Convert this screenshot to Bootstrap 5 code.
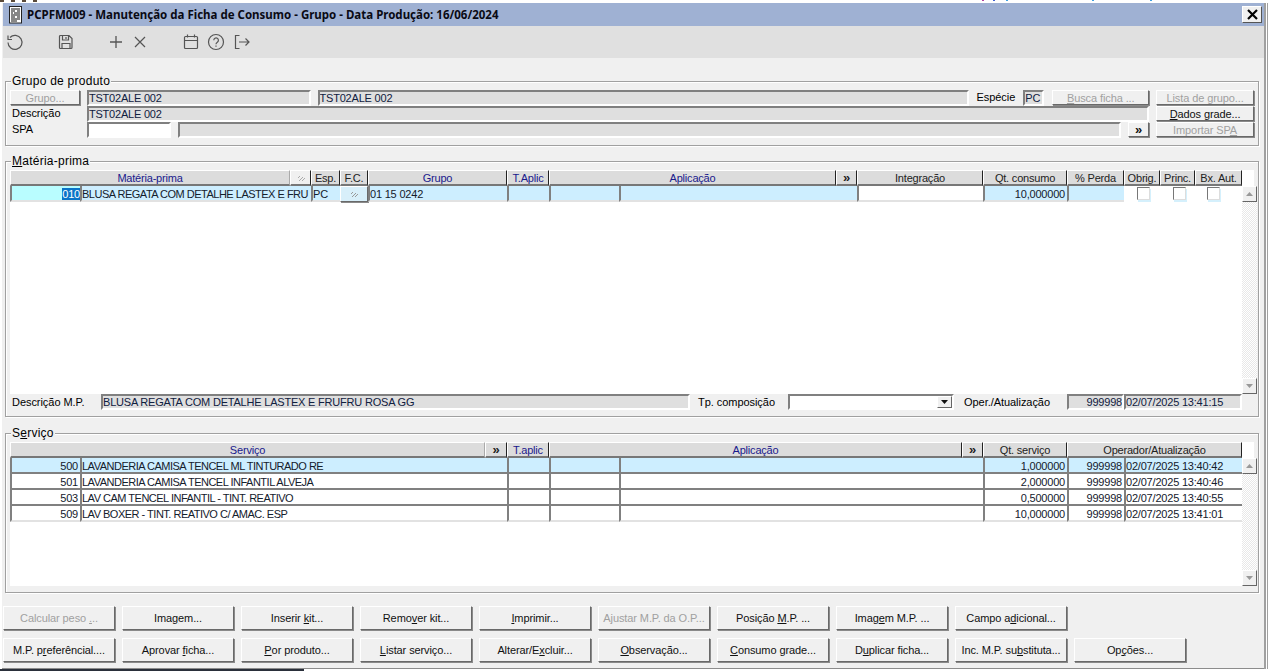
<!DOCTYPE html>
<html lang="pt">
<head>
<meta charset="utf-8">
<title>PCPFM009</title>
<link href="https://cdn.jsdelivr.net/npm/bootstrap@5.3.0/dist/css/bootstrap.min.css" rel="stylesheet">
<style>
html,body{height:671px;overflow:hidden;background:#fff}
body{font:11px/14px "Liberation Sans",Arial,sans-serif;color:#000;letter-spacing:-.2px}
.strip{height:3px;background:
 linear-gradient(90deg,#5a4a3a 0 4px,transparent 4px 11px,#5a4a3a 11px 15px,transparent 15px 22px,#5a4a3a 22px 26px,transparent 26px 33px,#5a4a3a 33px 37px,transparent 37px) 0 0/60px 2px no-repeat,
 linear-gradient(90deg,#b040a0 0 2px,transparent 2px 11px,#4060d0 11px 13px,transparent 13px 24px,#40a0e0 24px 26px,transparent 26px 110px,#40a0e0 110px 112px,transparent 112px 168px,#40a0e0 168px 170px,transparent 170px) 982px 0/200px 1px no-repeat,#fff}
.appwin{margin-left:2px;width:1261px;height:665px;background:#f0f0f0;border-bottom:1px solid #8c8c8c;box-shadow:2px 0 0 #a0a0a0,3px 0 0 #fff,4px 0 0 #a0a0a0;box-sizing:content-box;padding-left:1px}
.titlebar{height:23px;background:#9fb1d3;font:bold 11.5px/22px "Noto Sans",sans-serif;padding-left:5px;gap:4px;white-space:nowrap;letter-spacing:0;color:#0a0a14}
.closex{width:20px;height:17px;margin:0 2px 0 auto;background:#f0f0f0;border:1px solid;border-color:#fff #555 #555 #fff;line-height:0}
.toolbar{height:32px;background:#e0e0e0;padding-left:3px}
.toolbar svg{display:block;fill:none;stroke:#555;stroke-width:1.200}
.gp{margin-left:2px;width:1254px;border:1px solid #a0a0a0;box-shadow:inset 1px 1px 0 #fff,1px 1px 0 #fff;position:relative}
.gp1{margin-top:23px;height:65px;padding:8px 4px 0 4px}
.gp2{margin-top:15px;height:256px;padding:8px 4px 0 4px}
.gp3{margin-top:16px;height:160px;padding:8px 4px 0 4px}
.gptitle{position:absolute;left:5px;top:-8px;background:#f0f0f0;padding:0 1px;font-size:12px;line-height:14px;letter-spacing:.25px}
.sunk{border:2px solid;border-color:#808080 #fff #fff #808080;background:#dfdfdf;height:16px;line-height:12px;padding-left:0;overflow:hidden;white-space:nowrap;color:#102040}
.sunk.wh{background:#fff}
.xbtn{display:flex;align-items:center;justify-content:center;background:#f0f0f0;border:1px solid;border-color:#fff #696969 #696969 #fff;box-shadow:1px 1px 0 #8a8a8a;white-space:nowrap;color:#111;padding:0;font:inherit;letter-spacing:-.1px}
.xbtn.off{color:#a0a0a0}
.lab{white-space:nowrap;letter-spacing:-.05px}
.labin{padding-left:2px}
.frow{height:16px}
.xgrid{display:grid;width:1232px;flex:none;align-content:start}
.g1{grid-template-columns:70px 210px 21px 29px 28px 139px 42px 70px 217px 21px 126px 84px 57px 36px 35px 47px;grid-auto-rows:16px}
.g2{grid-template-columns:70px 405px 22px 42px 70px 343px 21px 84px 57px 118px;grid-auto-rows:16px}
.hc{display:flex;align-items:center;justify-content:center;background:#dcdcdc;border-left:1px solid #fff;border-top:1px solid #fff;border-right:1px solid #222;border-bottom:2px solid #777;color:#222;white-space:nowrap;overflow:hidden}
.hc.blue{color:#1a1a8c}
.hc.flat{border-right-color:#aaa}
.hc.lt{background:#f0f0f0}
.arrows{font:bold 13px/12px "Liberation Sans",sans-serif}
.cc{border-left:2px solid #808080;border-bottom:2px solid #808080;background:#fff;white-space:nowrap;overflow:hidden;padding:1px 2px 0 0;line-height:14px;color:#14202c}
.cc.rt{text-align:right}
.cc.sel{background:#cdeeff}
.cc.idc{background:#b9fdff}
.cc.lastr{border-bottom-color:#e2e2e2}
.upc{letter-spacing:-.5px}
.hl{background:#0a74c8;color:#fff}
.s2{grid-column:span 2}
.gridwrap{height:224px;background:#fff}
.gridwrap2{height:144px;background:#fff}
.sbar{width:15px;margin-top:16px;background:repeating-conic-gradient(#e8e8e8 0 25%,#fff 0 50%) 0 0/2px 2px;justify-content:space-between}
.sbtn{width:15px;height:16px;background:#f0f0f0;border:1px solid;border-color:#fff #666 #666 #fff;display:flex;align-items:center;justify-content:center}
.boxc{width:13px;height:13px;background:#fff;border:1px solid;border-color:#777 #ddd #ddd #777;box-shadow:1px 2px 0 #d5f0fc;display:block;margin:1px 0 0 13px}
.ckcell{background:#fff}
.ckcell.lastb .boxc{margin-left:12px}
.drow{height:16px}
.cbo{position:relative;width:166px;height:16px;background:#fff;border:2px solid;border-color:#808080 #fff #fff #808080}
.cboarr{position:absolute;right:0;top:0;width:15px;height:12px;background:#f0f0f0;border:1px solid;border-color:#fff #666 #666 #fff;display:flex;align-items:center;justify-content:center}
.bbar{padding:13px 0 0 0;gap:8px}
.brow{gap:7px}
.brow .xbtn{width:112px;height:24px}
u{text-underline-offset:1px}
.bottomline{height:2px;background:linear-gradient(90deg,#2a2f3a 0 304px,#fff 304px)}
</style>
</head>
<body>
<div class="strip"></div>
<div class="appwin">
  <div class="titlebar d-flex align-items-center">
    <svg width="15" height="18" viewBox="0 0 15 18"><rect x="1.500" y=".5" width="12" height="16.500" fill="#fff" stroke="#222"/><path d="M3 3h9M3 5h4M9 5h3M3 7h2M6 7h6M3 9h9M3 11h4M9 11h3M3 13h9M3 15h6" stroke="#111" stroke-width="1.200"/></svg>
    <span>PCPFM009 - Manutenção da Ficha de Consumo - Grupo - Data Produção: 16/06/2024</span>
    <div class="closex d-flex align-items-center justify-content-center"><svg width="11" height="11" viewBox="0 0 11 11"><path d="M1 1l9 9M10 1L1 10" stroke="#000" stroke-width="2.200"/></svg></div>
  </div>
  <div class="toolbar d-flex align-items-center">
    <svg width="18" height="18" viewBox="0 0 18 18"><path d="M4 4.500A7 7 0 1 1 2 9.500M2 2.500v4h4"/></svg>
    <svg width="18" height="18" viewBox="0 0 18 18" style="margin-left:33px"><path d="M3.500 2.500h8.500l3 3v9a1 1 0 0 1-1 1h-10.500a1 1 0 0 1-1-1v-11a1 1 0 0 1 1-1zM5.500 3v4h6V3M5 15.500V10.500h8v5M9 4v2"/></svg>
    <svg width="16" height="16" viewBox="0 0 16 16" style="margin-left:33px"><path d="M8 2v12M2 8h12" stroke-width="1.300"/></svg>
    <svg width="16" height="16" viewBox="0 0 16 16" style="margin-left:8px"><path d="M3 3l10 10M13 3L3 13"/></svg>
    <svg width="18" height="18" viewBox="0 0 18 18" style="margin-left:34px"><path d="M3.500 3.500h11a1 1 0 0 1 1 1v10a1 1 0 0 1-1 1h-11a1 1 0 0 1-1-1v-10a1 1 0 0 1 1-1zM2.500 7.500h13M5.500 1.500v3M12.500 1.500v3"/></svg>
    <svg width="18" height="18" viewBox="0 0 18 18" style="margin-left:7px"><circle cx="9" cy="9" r="7.500"/><path d="M6.800 7.200a2.300 2.300 0 1 1 3.500 2c-.9.6-1.300 1-1.300 2M9 12.500v1.200"/></svg>
    <svg width="18" height="18" viewBox="0 0 18 18" style="margin-left:8px"><path d="M6.500 2.500h-4v13h4M6 9h10M12.500 5.500L16 9l-3.500 3.500"/></svg>
  </div>

  <div class="gp gp1">
    <div class="gptitle">Grupo de produto</div>
    <div class="frow d-flex">
      <button class="xbtn off" style="width:70px;height:15px">Grupo...</button>
      <div class="sunk" style="width:224px;margin-left:7px">TST02ALE 002</div>
      <div class="sunk" style="width:653px;margin-left:7px">TST02ALE 002</div>
      <span class="lab" style="width:47px;margin-left:7px">Espécie</span>
      <div class="sunk" style="width:21px">PC</div>
      <button class="xbtn off" style="width:97px;height:15px;margin-left:8px"><span><u>B</u>usca ficha ...</span></button>
      <button class="xbtn off" style="width:98px;height:15px;margin-left:7px">Lista de grupo...</button>
    </div>
    <div class="frow d-flex">
      <span class="lab labin" style="width:77px">Descrição</span>
      <div class="sunk" style="width:1064px">TST02ALE 002</div>
      <button class="xbtn" style="width:98px;height:15px;margin-left:7px"><span><u>D</u>ados grade...</span></button>
    </div>
    <div class="frow d-flex">
      <span class="lab labin" style="width:77px">SPA</span>
      <div class="sunk wh" style="width:84px"></div>
      <div class="sunk" style="width:945px;margin-left:7px"></div>
      <button class="xbtn arrows" style="width:21px;height:15px;margin-left:7px">»</button>
      <button class="xbtn off" style="width:98px;height:15px;margin-left:7px"><span>Importar SP<u>A</u></span></button>
    </div>
  </div>

  <div class="gp gp2">
    <div class="gptitle"><u>M</u>atéria-prima</div>
    <div class="d-flex gridwrap">
      <div class="xgrid g1">
        <div class="hc blue flat s2">Matéria-prima</div>
        <div class="hc lt"><svg width="10" height="8" viewBox="0 0 10 8"><path d="M2 4l2-2M5 5l2-2M3 7l2-2M6 7l3-3" stroke="#aaa"/></svg></div>
        <div class="hc">Esp.</div>
        <div class="hc">F.C.</div>
        <div class="hc blue">Grupo</div>
        <div class="hc blue">T.Aplic</div>
        <div class="hc blue s2">Aplicação</div>
        <div class="hc arrows">»</div>
        <div class="hc">Integração</div>
        <div class="hc">Qt. consumo</div>
        <div class="hc">% Perda</div>
        <div class="hc">Obrig.</div>
        <div class="hc">Princ.</div>
        <div class="hc">Bx. Aut.</div>

        <div class="cc rt idc lastr" style="padding-right:0"><span class="hl">010</span></div>
        <div class="cc sel s2 lastr upc">BLUSA REGATA COM DETALHE LASTEX E FRU</div>
        <div class="cc sel lastr">PC</div>
        <button class="xbtn" style="background:#d8effa"><svg width="10" height="8" viewBox="0 0 10 8"><path d="M2 4l2-2M5 5l2-2M3 7l2-2M6 7l3-3" stroke="#999"/></svg></button>
        <div class="cc sel lastr">01 15 0242</div>
        <div class="cc sel lastr"></div>
        <div class="cc sel lastr"></div>
        <div class="cc sel s2 lastr"></div>
        <div class="cc lastr"></div>
        <div class="cc sel rt lastr">10,000000</div>
        <div class="cc sel lastr"></div>
        <div class="ckcell"><span class="boxc"></span></div>
        <div class="ckcell"><span class="boxc"></span></div>
        <div class="ckcell lastb"><span class="boxc"></span></div>
      </div>
      <div class="sbar d-flex flex-column">
        <div class="sbtn"><svg width="7" height="4"><path d="M3.500 0L7 4H0z" fill="#999"/></svg></div>
        <div class="sbtn"><svg width="7" height="4"><path d="M0 0h7L3.500 4z" fill="#999"/></svg></div>
      </div>
    </div>
    <div class="drow d-flex align-items-center">
      <span class="lab labin" style="width:91px">Descrição M.P.</span>
      <div class="sunk" style="width:589px">BLUSA REGATA COM DETALHE LASTEX E FRUFRU ROSA GG</div>
      <span class="lab" style="width:90px;margin-left:8px">Tp. composição</span>
      <div class="cbo"><span class="cboarr"><svg width="7" height="4"><path d="M0 0h7L3.500 4z" fill="#111"/></svg></span></div>
      <span class="lab" style="width:103px;margin-left:10px">Oper./Atualização</span>
      <div class="sunk text-end" style="width:57px">999998</div>
      <div class="sunk" style="width:118px">02/07/2025 13:41:15</div>
    </div>
  </div>

  <div class="gp gp3">
    <div class="gptitle">S<u>e</u>rviço</div>
    <div class="d-flex gridwrap2">
      <div class="xgrid g2">
        <div class="hc blue flat s2">Serviço</div>
        <div class="hc arrows">»</div>
        <div class="hc blue">T.aplic</div>
        <div class="hc blue s2">Aplicação</div>
        <div class="hc arrows">»</div>
        <div class="hc">Qt. serviço</div>
        <div class="hc s2">Operador/Atualização</div>

        <div class="cc rt sel">500</div><div class="cc sel s2 upc">LAVANDERIA CAMISA TENCEL ML TINTURADO RE</div><div class="cc sel"></div><div class="cc sel"></div><div class="cc sel s2"></div><div class="cc sel rt">1,000000</div><div class="cc sel rt">999998</div><div class="cc sel">02/07/2025 13:40:42</div>
        <div class="cc rt">501</div><div class="cc s2 upc">LAVANDERIA CAMISA TENCEL INFANTIL ALVEJA</div><div class="cc"></div><div class="cc"></div><div class="cc s2"></div><div class="cc rt">2,000000</div><div class="cc rt">999998</div><div class="cc">02/07/2025 13:40:46</div>
        <div class="cc rt">503</div><div class="cc s2 upc">LAV CAM TENCEL INFANTIL - TINT. REATIVO</div><div class="cc"></div><div class="cc"></div><div class="cc s2"></div><div class="cc rt">0,500000</div><div class="cc rt">999998</div><div class="cc">02/07/2025 13:40:55</div>
        <div class="cc rt lastr">509</div><div class="cc s2 upc lastr">LAV BOXER - TINT. REATIVO C/ AMAC. ESP</div><div class="cc lastr"></div><div class="cc lastr"></div><div class="cc s2 lastr"></div><div class="cc rt lastr">10,000000</div><div class="cc rt lastr">999998</div><div class="cc lastr">02/07/2025 13:41:01</div>
      </div>
      <div class="sbar d-flex flex-column">
        <div class="sbtn"><svg width="7" height="4"><path d="M3.500 0L7 4H0z" fill="#999"/></svg></div>
        <div class="sbtn"><svg width="7" height="4"><path d="M0 0h7L3.500 4z" fill="#999"/></svg></div>
      </div>
    </div>
  </div>

  <div class="bbar d-flex flex-column">
    <div class="brow d-flex">
      <button class="xbtn off"><span>Calcular peso <u>.</u>..</span></button>
      <button class="xbtn"><span>Ima<u>g</u>em...</span></button>
      <button class="xbtn"><span>Inserir <u>k</u>it...</span></button>
      <button class="xbtn"><span>Remo<u>v</u>er kit...</span></button>
      <button class="xbtn"><span><u>I</u>mprimir...</span></button>
      <button class="xbtn off"><span>Ajustar M.P. da O.P...</span></button>
      <button class="xbtn"><span>Posição <u>M</u>.P. ...</span></button>
      <button class="xbtn"><span>Imag<u>e</u>m M.P. ...</span></button>
      <button class="xbtn"><span>Campo a<u>d</u>icional...</span></button>
    </div>
    <div class="brow d-flex">
      <button class="xbtn"><span>M.P. p<u>r</u>eferêncial....</span></button>
      <button class="xbtn"><span>Aprovar <u>f</u>icha...</span></button>
      <button class="xbtn"><span><u>P</u>or produto...</span></button>
      <button class="xbtn"><span><u>L</u>istar serviço...</span></button>
      <button class="xbtn"><span>Alterar/E<u>x</u>cluir...</span></button>
      <button class="xbtn"><span><u>O</u>bservação...</span></button>
      <button class="xbtn"><span><u>C</u>onsumo grade...</span></button>
      <button class="xbtn"><span>D<u>u</u>plicar ficha...</span></button>
      <button class="xbtn"><span>Inc. M.P. su<u>b</u>stituta...</span></button>
      <button class="xbtn"><span>Op<u>ç</u>ões...</span></button>
    </div>
  </div>
</div>
<div class="bottomline"></div>
</body>
</html>
